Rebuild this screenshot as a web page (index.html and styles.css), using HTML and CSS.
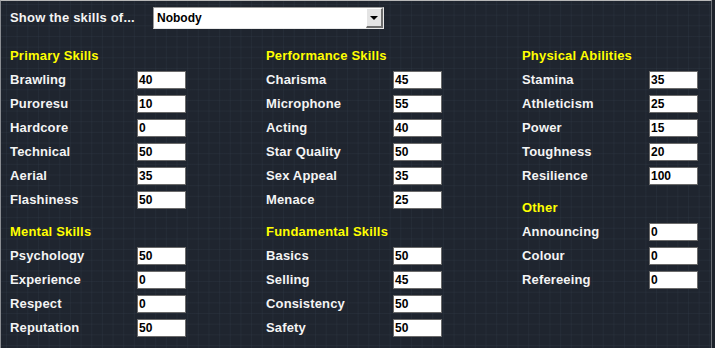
FILE: index.html
```html
<!DOCTYPE html>
<html>
<head>
<meta charset="utf-8">
<link rel="stylesheet" href="styles.css">
</head>
<body>
<div class="frame">
  <div class="topbar">
    <span class="show-label">Show the skills of...</span>
    <div class="select">
      <span class="select-value">Nobody</span>
      <span class="select-btn"><span class="arrow"></span></span>
    </div>
  </div>
  <div class="columns">
    <div class="col">
      <div class="section">
        <div class="heading">Primary Skills</div>
        <div class="row"><span class="label">Brawling</span><span class="box">40</span></div>
        <div class="row"><span class="label">Puroresu</span><span class="box">10</span></div>
        <div class="row"><span class="label">Hardcore</span><span class="box">0</span></div>
        <div class="row"><span class="label">Technical</span><span class="box">50</span></div>
        <div class="row"><span class="label">Aerial</span><span class="box">35</span></div>
        <div class="row"><span class="label">Flashiness</span><span class="box">50</span></div>
      </div>
      <div class="section">
        <div class="heading">Mental Skills</div>
        <div class="row"><span class="label">Psychology</span><span class="box">50</span></div>
        <div class="row"><span class="label">Experience</span><span class="box">0</span></div>
        <div class="row"><span class="label">Respect</span><span class="box">0</span></div>
        <div class="row"><span class="label">Reputation</span><span class="box">50</span></div>
      </div>
    </div>
    <div class="col">
      <div class="section">
        <div class="heading">Performance Skills</div>
        <div class="row"><span class="label">Charisma</span><span class="box">45</span></div>
        <div class="row"><span class="label">Microphone</span><span class="box">55</span></div>
        <div class="row"><span class="label">Acting</span><span class="box">40</span></div>
        <div class="row"><span class="label">Star Quality</span><span class="box">50</span></div>
        <div class="row"><span class="label">Sex Appeal</span><span class="box">35</span></div>
        <div class="row"><span class="label">Menace</span><span class="box">25</span></div>
      </div>
      <div class="section">
        <div class="heading">Fundamental Skills</div>
        <div class="row"><span class="label">Basics</span><span class="box">50</span></div>
        <div class="row"><span class="label">Selling</span><span class="box">45</span></div>
        <div class="row"><span class="label">Consistency</span><span class="box">50</span></div>
        <div class="row"><span class="label">Safety</span><span class="box">50</span></div>
      </div>
    </div>
    <div class="col">
      <div class="section">
        <div class="heading">Physical Abilities</div>
        <div class="row"><span class="label">Stamina</span><span class="box">35</span></div>
        <div class="row"><span class="label">Athleticism</span><span class="box">25</span></div>
        <div class="row"><span class="label">Power</span><span class="box">15</span></div>
        <div class="row"><span class="label">Toughness</span><span class="box">20</span></div>
        <div class="row"><span class="label">Resilience</span><span class="box">100</span></div>
      </div>
      <div class="section">
        <div class="heading">Other</div>
        <div class="row"><span class="label">Announcing</span><span class="box">0</span></div>
        <div class="row"><span class="label">Colour</span><span class="box">0</span></div>
        <div class="row"><span class="label">Refereeing</span><span class="box">0</span></div>
      </div>
    </div>
  </div>
</div>
</body>
</html>
```
FILE: styles.css
```css
html, body {
  margin: 0;
  padding: 0;
  background: #1d222b;
  overflow: hidden;
}
body {
  font-family: "Liberation Sans", Arial, sans-serif;
  font-weight: bold;
}
.frame {
  box-sizing: border-box;
  width: 712px;
  height: 348px;
  border-top: 1px solid #b8b8b8;
  border-left: 1px solid #8a8d92;
  border-right: 1px solid #6a6e74;
  background-color: #1f252f;
  background-image:
    linear-gradient(to right, rgba(70, 85, 100, 0.15) 1px, transparent 1px),
    linear-gradient(to bottom, rgba(70, 85, 100, 0.15) 1px, transparent 1px);
  background-size: 10.67px 10.67px;
  background-position: 5px 3px;
  padding-left: 8px;
}
.topbar {
  display: flex;
  align-items: center;
  margin-top: 6px;
  height: 22px;
}
.show-label {
  width: 144px;
  color: #f4f4f4;
  font-size: 13px;
  padding-left: 1px;
  box-sizing: border-box;
  margin-top: -2px;
  letter-spacing: 0.2px;
}
.select {
  box-sizing: border-box;
  width: 231px;
  height: 22px;
  background: #fff;
  border-top: 1px solid #9a9a9a;
  border-left: 1px solid #9a9a9a;
  border-right: 1px solid #e8e8e8;
  border-bottom: 1px solid #e8e8e8;
  display: flex;
  align-items: center;
  justify-content: space-between;
}
.select-value {
  font-size: 12px;
  color: #000;
  padding-left: 3px;
}
.select-btn {
  box-sizing: border-box;
  width: 17px;
  height: 20px;
  background: #e4e4e4;
  border-top: 1px solid #ffffff;
  border-left: 1px solid #ffffff;
  border-right: 2px solid #6e6e6e;
  border-bottom: 2px solid #6e6e6e;
  display: flex;
  align-items: center;
  justify-content: center;
}
.arrow {
  width: 0;
  height: 0;
  border-left: 4px solid transparent;
  border-right: 4px solid transparent;
  border-top: 4px solid #000;
  margin-top: 1px;
}
.columns {
  display: grid;
  grid-template-columns: 256px 256px 184px;
  margin-top: 14px;
}
.section {
  margin-bottom: 8px;
}
.heading {
  box-sizing: border-box;
  height: 24px;
  line-height: 24px;
  padding-top: 1px;
  color: #ffff00;
  font-size: 13px;
  padding-left: 1px;
  letter-spacing: 0.2px;
}
.row {
  display: flex;
  align-items: center;
  height: 24px;
}
.label {
  width: 128px;
  color: #f4f4f4;
  font-size: 13px;
  padding-left: 1px;
  box-sizing: border-box;
  letter-spacing: 0.15px;
}
.box {
  box-sizing: border-box;
  width: 49px;
  height: 18px;
  margin-top: 2px;
  background: #fff;
  border: 1px solid #6a6a6a;
  color: #000;
  font-size: 12px;
  line-height: 16px;
  padding-left: 1px;
}
```
